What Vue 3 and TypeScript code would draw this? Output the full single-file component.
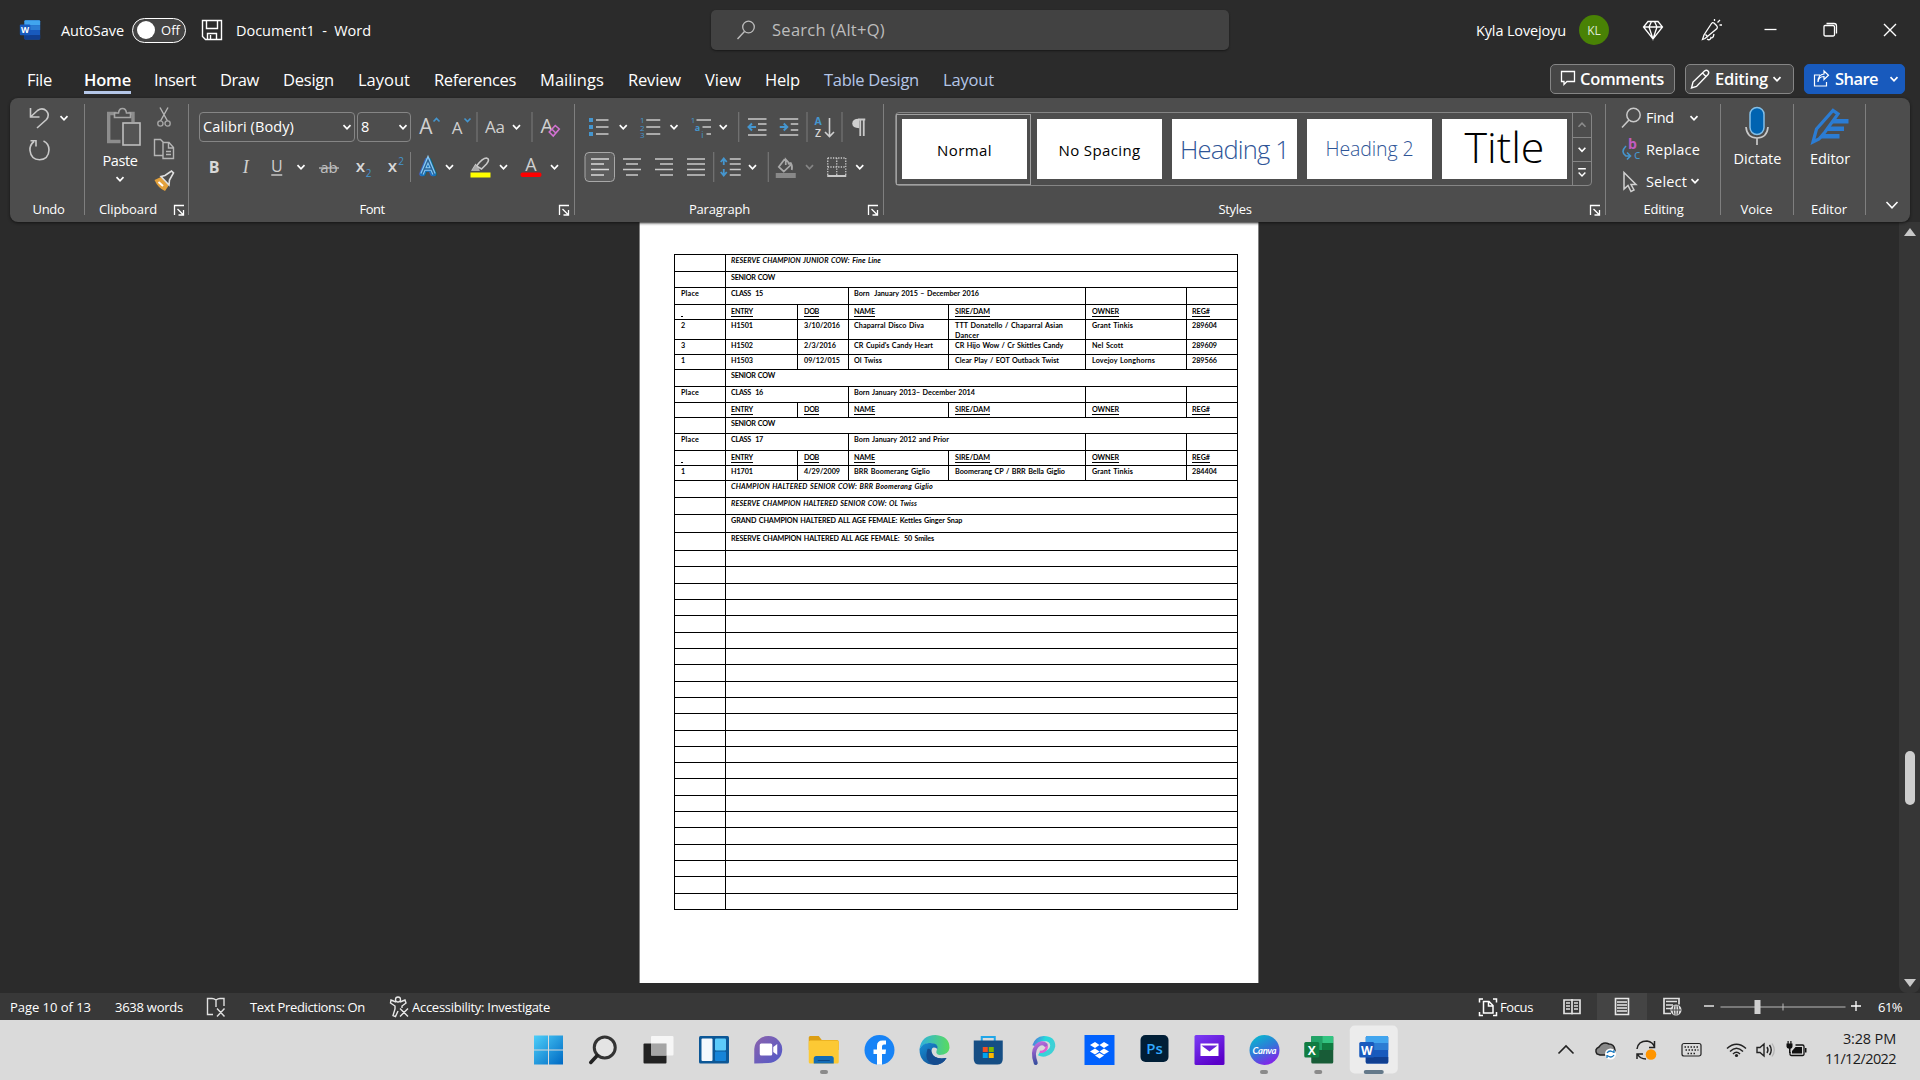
<script setup lang="ts">
type Spot = [name: string, center: number]
interface Cell { name: string; width: number; left: number }

// Splits the span from..to into cells whose icons sit on the given centers.
function cells(from: number, to: number, spots: Spot[]): Cell[] {
  let start = from
  return spots.map(([name, center], i) => {
    const end = i + 1 < spots.length ? (center + spots[i + 1][1]) / 2 : to
    const cell = { name, width: end - start, left: start - center }
    start = end
    return cell
  })
}

// Tracks a label so that it takes the given width in pixels.
const vFit = {
  mounted(el: HTMLElement, binding: { value: number }) {
    const range = document.createRange()
    range.selectNodeContents(el)
    const natural = range.getBoundingClientRect().width
    const count = (el.textContent ?? '').length
    if (count > 0) el.style.letterSpacing = `${((binding.value - natural) / count).toFixed(3)}px`
  },
}

const line = (d: string, color = '#c9c9c9', width = 1.5) =>
  `<path d="${d}" fill="none" stroke="${color}" stroke-width="${width}"/>`
const glyph = (t: string, x: number, y: number, size: number, fill = '#d0d0d0', extra = '') =>
  `<text x="${x}" y="${y}" font-size="${size}" fill="${fill}" text-anchor="middle" font-family="Open Sans" ${extra}>${t}</text>`
const wordMark = (s: number) => `<g transform="scale(${s})"><rect x="-8" y="-14" width="22.500" height="27.500" rx="1.500" fill="#185abd"/><path d="M-8 -12.500q0-1.500 1.500-1.500h19.500q1.500 0 1.500 1.500v5.500h-22.500z" fill="#41a5ee"/><rect x="-8" y="-7" width="22.500" height="7" fill="#2b7cd3"/><path d="M-8 7h22.500v5q0 1.500-1.500 1.500h-19.500q-1.500 0-1.500-1.500z" fill="#103f91"/><rect x="-14.500" y="-8" width="15" height="15.500" rx="1.500" fill="#185abd"/><text x="-7" y="4.600" font-size="12" font-weight="bold" fill="#fff" text-anchor="middle" font-family="Open Sans">W</text></g>`
const blue = '#4596cf'

const icons: Record<string, string> = {
  sep: line('M0-15V15', '#7d7d7d', 1),
  chev: line('M-3.500-1.800L0 1.800L3.500-1.800', '#fff', 1.7),
  chevDim: line('M-3.500-1.800L0 1.800L3.500-1.800', '#858585', 1.7),
  chevUpDim: line('M-3.500 1.800L0-1.800L3.500 1.800', '#8c8c8c', 1.5),
  chevMore: line('M-4-5H4M-3.500-1L0 2.500L3.500-1', '#fff', 1.5),
  collapse: line('M-5.500-3L0 2.800L5.500-3', '#fff', 1.5),
  launcher: line('M-4.500 5V-4.500H5M-1.500-1L4 4.500M4.500 0V5H-.5', '#fff', 1.3),
  word: wordMark(0.7),
  save: line('M-9.500-9.500H9.500V9.500H-6.500L-9.500 6.500ZM-5.500-9.500V-1.500H5.500V-9.500M-4.500 9.500V3.500H4.500V9.500M-1.500 5V9.500', '#fff', 1.4),
  search: line('M-8.500 9L-1.500 1.500', '#bdbdbd', 1.4) + '<circle cx="2.500" cy="-3" r="5.800" fill="none" stroke="#bdbdbd" stroke-width="1.300"/>',
  diamond: line('M-5-8.500H5L9.500-3L0 9L-9.500-3ZM-9.500-3H9.500M-4-3L0 9L4-3L1.500-8.500M-4-3L-1.500-8.500', '#fff', 1.3),
  pen: line('M-8.500 9.500L-6 8.500L6-1.500Q7-3 5.500-4.500L3-7Q1.500-8 .5-6.500L-7 5ZM-4 9Q-1 11 0 7.500Q2 9 3 4M3.500-9V-11M6.500-7.500L9-10M8.500-5H11M-5.500 4.500L-3 7', '#fff', 1.3),
  min: line('M-6-.5H6', '#fff', 1.3),
  restore: line('M-6-3.500Q-6-4.500-5-4.500H3Q4.500-4.500 4.500-3V4.500Q4.500 6 3 6H-4.500Q-6 6-6 4.500ZM-3.500-6.500H4Q6.500-6.500 6.500-4V3.500', '#fff', 1.3),
  close: line('M-6-6L6 6M6-6L-6 6', '#fff', 1.4),
  comment: line('M-6.500-6.500H6.500V3.500H-1L-4 6.500V3.500H-6.500Z', '#fff', 1.3),
  pencil: line('M-8.500 9L-7 3L4.500-8Q6.500-9.500 8-8Q9.500-6.500 8 -4.500L-3.500 7.500ZM2.500-6L6.500-2', '#fff', 1.4),
  share: line('M-1-4H-6.500V7H5.500V3M-3 3Q-2.500-2.500 3-2.500V.5L7.500-3.800L3-8V-5Q-3-4.500-3 3', '#fff', 1.2),
  undo: line('M-9-10V-1H0M-8.500-1.500L-2-7.500Q3-11 7-7Q10.500-3 7 1.500L-2.500 10', '#c9c9c9', 1.6),
  redo: line('M-5.500-8.500Q-10-5-9.500.5Q-8.500 9.500 0 9.800Q9 9.500 9.500 0Q9.500-6.500 4-9M-9-9.300H-3.500V-3.500', '#c9c9c9', 1.6),
  paste: '<g transform="translate(2.500 0)"><path d="M-6-13.500H-13.800V14.500H-2M6-13.500H10.500V-5" fill="none" stroke="#8d8d8d" stroke-width="3.400"/><path d="M-8-9.500V-14H-4Q-3.500-18.500 0-18.500Q3.500-18.500 4-14H8V-9.500Z" fill="#4d4d4d" stroke="#a5a5a5" stroke-width="1.600"/><rect x="0.500" y="-4" width="17" height="22" fill="#555" stroke="#bdbdbd" stroke-width="1.600"/></g>',
  cut: line('M-4-9.500L3.500 4M4-9.500L-3.500 4', '#b5b5b5', 1.4) + '<g fill="none" stroke="#a5a5a5" stroke-width="1.400"><circle cx="-3.600" cy="6.500" r="2.600"/><circle cx="3.600" cy="6.500" r="2.600"/></g>',
  copy: line('M-1 6.500H-9.500V-9.500H-3.500L0-6M-1-6.500H5L9.500-1.500V9.500H-1ZM4.500-6V-1H9M2 2.500H7M2 5.500H7', '#b5b5b5', 1.4),
  brush: '<path d="M-9.500-1L-3-4L5 4L1 10Q-6 7-9.500-1Z" fill="#e3a13c"/><path d="M-5.500 1L-1 5" stroke="#fff" stroke-width="2"/><path d="M-3-4.500L1-5.500L7.500-10L9.500-8L5.500-1L5 4Z" fill="#4d4d4d" stroke="#e0e0e0" stroke-width="1.600"/>',
  grow: glyph('A', -1, 7, 21) + line('M6.500-5.500L9.500-8.500L12.500-5.500', blue, 1.6),
  shrink: glyph('A', -2, 7, 17) + line('M5.500-8.500L8.500-5.500L11.500-8.500', blue, 1.6),
  aa: glyph('Aa', 0, 6, 17, '#d0d0d0', 'textLength="20"'),
  clear: glyph('A', -3, 6, 20) + '<path d="M-.5 5L5.500-1.500L9.500 2L3.500 9Z M2 2L6 6" fill="#4d4d4d" stroke="#d272d2" stroke-width="1.600"/>',
  bold: glyph('B', 0, 6, 16, '#d8d8d8', 'font-weight="bold"'),
  italic: '<text x="0" y="6" font-size="18" fill="#d0d0d0" text-anchor="middle" font-style="italic" font-family="Liberation Serif">I</text>',
  underline: glyph('U', 0, 5, 16) + line('M-5.500 8H5.500', '#d0d0d0', 1.4),
  strike: glyph('ab', 0, 6, 15, '#c0c0c0') + line('M-10 1H10', '#c0c0c0', 1.3),
  sub: glyph('x', -2, 5, 17, '#d8d8d8', 'font-weight="600"') + glyph('2', 6, 10, 10, blue),
  sup: glyph('x', -3, 5, 17, '#d8d8d8', 'font-weight="600"') + glyph('2', 5.500, -2, 10, blue),
  effect: glyph('A', 0, 7, 20, '#1672be', 'stroke="#1672be" stroke-width="4.500" stroke-linejoin="round"') + line('M-6 7L0-7.500L6 7M-3.500 2H3.500', '#8cc8f2', 3.6) + line('M-6.200 7.500L0-7L6.200 7.500M-3.500 2H3.500', '#2a6496', 1.4),
  marker: '<rect x="-10" y="5.500" width="20" height="5" fill="#ff0"/>' + line('M-8 3L-5-2L-2 3ZM-4-1Q2-9 6-9Q10-8 6-3L1 2Z', '#c9c9c9', 1.6) + '<path d="M-9 4L-5-2L-1 3Z" fill="#aaa"/>',
  color: glyph('A', 0, 3.500, 18) + '<rect x="-10.500" y="5.500" width="21" height="4.500" rx="2" fill="#f00"/>',
  bullets: '<path d="M-10-9h4v4h-4zM-10-2h4v4h-4zM-10 5h4v4h-4z" fill="#4596cf"/>' + line('M-3-7H9.500M-3 0H9.500M-3 7H9.500', '#c9c9c9', 1.7),
  numbers: glyph('1', -8, -4, 8, blue) + glyph('2', -8, 3.500, 8, blue) + glyph('3', -8, 11, 8, blue) + line('M-4-7H10M-4 0H10M-4 7H10', '#c9c9c9', 1.7),
  multi: glyph('1', -8.500, -4, 8, blue) + glyph('a', -4, 3.500, 9, blue, 'font-weight="bold"') + glyph('i', 1, 11, 9, blue) + line('M-5-7H9.500M1 0H9.500M5 7H9.500', '#c9c9c9', 1.7),
  outdent: line('M-9-8H9.500M1-3H9.500M1 3H9.500M-9 8H9.500', '#c9c9c9', 1.6) + line('M-1 0H-8M-5-3.500L-8.500 0L-5 3.500', blue, 2),
  indent: line('M-9-8H9.500M2-3H9.500M2 3H9.500M-9 8H9.500', '#c9c9c9', 1.6) + line('M-9 0H-2M-5-3.500L-1.500 0L-5 3.500', blue, 2),
  sort: glyph('A', -5.500, -2, 10.500, blue, 'font-weight="bold"') + glyph('Z', -5.500, 9.500, 10.500, '#d8d8d8', 'font-weight="600"') + line('M6-9V9M1.500 5L6 9.500L10.500 5', '#d0d0d0', 1.6),
  pilcrow: line('M2-7V9M5.500-7V9M0-7.500H7', '#c9c9c9', 1.8) + '<path d="M1-8.300Q-6-8.500-6-3.500Q-6 1 1 1.200Z" fill="#d0d0d0"/>',
  left: '<rect x="-15" y="-14.500" width="29.500" height="29" rx="4" fill="#5c5c5c" stroke="#a8a8a8"/>' + line('M-9-8H9M-9-3H4M-9 2.500H9M-9 8H4', '#d8d8d8', 1.6),
  center: line('M-9-8H9M-6-3H6M-9 2.500H9M-6 8H6', '#c9c9c9', 1.6),
  right: line('M-9-8H9M-4-3H9M-9 2.500H9M-4 8H9', '#c9c9c9', 1.6),
  justify: line('M-9-8H9M-9-3H9M-9 2.500H9M-9 8H9', '#c9c9c9', 1.6),
  spacing: line('M-1-8H10M-1-3H10M-1 2.500H10M-1 8H10', '#c9c9c9', 1.6) + line('M-7-8V-2M-10-5L-7-8.500L-4-5M-7 2V8M-10 5L-7 8.500L-4 5', blue, 1.8),
  bucket: '<rect x="-10" y="6" width="20" height="5" fill="#888"/>' + line('M-1-8L-7 0L-2 4.500L5-2L0-7.500V-2M2-3L5-4Q7-1 6 3', '#a8a8a8', 1.7),
  borders: '<path d="M-9-9H9M-9-9V8M9-9V8M0-9V8M-9 0H9" fill="none" stroke="#c9c9c9" stroke-width="1.300" stroke-dasharray="1.300 1.300"/>' + line('M-9.500 9H9.500', '#c9c9c9', 2),
  find: line('M-9 9.500L-2 2', '#c9c9c9', 1.6) + '<circle cx="2.500" cy="-3" r="6.700" fill="none" stroke="#c9c9c9" stroke-width="1.500"/>',
  replace: glyph('b', 1.500, -1, 14, '#c25cc0', 'font-weight="bold"') + glyph('c', 6, 9, 13, blue) + line('M-5-4Q-11 2-5 6L-1 6M-4 2.500L-.5 6L-4 9.500', blue, 1.6),
  select: line('M-6-9.500V7L-2 3.500L1 9.500L4 8L1 2.500H6Z', '#d0d0d0', 1.5),
  mic: line('M-11 1Q-10 12 0 12Q10 12 11 1M0 12V19', '#c9c9c9', 1.7) + '<rect x="-7" y="-18.500" width="14" height="27" rx="7" fill="#0063b1" stroke="#83bfe8" stroke-width="1.500"/>',
  editor: '<path d="M-16 16L-12.500 3L4-15.500L9-12L-4 6L-10 13Z" fill="none" stroke="#2b7cd3" stroke-width="3.200"/><path d="M6-7H19.500V-2.500H2ZM0 0.500H15V5H-4ZM-6 8H10.500V12.500H-11Z" fill="#2b7cd3"/>',
  proof: line('M0-7Q-2-8.500-4-8.500H-8.500V7.500H-3M0-7Q2-8.500 4-8.500H8V-1M0-7V0M1 1.500L8.500 9.500M8.500 1.500L1 9.500', '#e0e0e0', 1.4),
  access: '<circle cx="-1" cy="-7.500" r="2.500" fill="none" stroke="#e8e8e8" stroke-width="1.300"/>' + line('M-3-5L-8-7L-8.500-4L-4-1V2L-6 8.500L-3.500 9.500L-1 4M1-5L6-7L7-4L3-1V1M1 1.500L9 9.500M9 1.500L1 9.500', '#e8e8e8', 1.4),
  focus: line('M-5-8H-8.500V-4.500M-8.500 5V8.500H-5M5-8H8.500V-4.500M8.500 5V8.500H5M-4.500-5.500H1L5-1.500V6H-4.500ZM.5-5V-1H4.500', '#fff', 1.5),
  read: line('M0-6.500H-8V7H0H8V-6.500ZM0-7.500V8M-6-3.500H-2M-6-.5H-2M-6 2.500H-2M2-3.500H6M2-.5H6M2 2.500H6', '#e0e0e0', 1.7),
  print: line('M-6.500-8H6.500V8H-6.500ZM-5-4.500H5M-5-1.500H5M-5 1.500H5M-5 4.500H5', '#e8e8e8', 1.6),
  web: line('M-1 7H-8V-8H7V-2M-6-5H5M-6-1.500H1M-6 2H-1', '#e0e0e0', 1.7) + '<circle cx="4" cy="3.500" r="5.500" fill="#e0e0e0"/>' + line('M-1 3.500H9M4-1V8.500M2-1Q0 3.500 2 8M6-1Q8 3.500 6 8', '#383838', .9),
  minus: line('M-5-1H5', '#fff', 1.3),
  plus: line('M-5-1H5M0-6V4', '#fff', 1.3),
  slider: '<path d="M-62.500 0H62.500M0-3.500V3.500" stroke="#b8b8b8" fill="none"/><rect x="-28.500" y="-7" width="6" height="14" fill="#d0d0d0"/>',
  windows: '<defs><linearGradient id="wn" gradientUnits="userSpaceOnUse" x1="-14" y1="-14" x2="14" y2="14"><stop stop-color="#4ccdf8"/><stop offset="1" stop-color="#006ac4"/></linearGradient></defs><path d="M-14.500-14.500H-.5V-.5H-14.500ZM.5-14.500H14.500V-.5H.5ZM-14.500.5H-.5V14.500H-14.500ZM.5.5H14.500V14.500H.5Z" fill="url(#wn)"/>',
  lens: '<circle cx="1.500" cy="-2.500" r="10.500" fill="#e4e4e4" stroke="#333" stroke-width="3"/><path d="M-6 5.500L-12.500 12.500" stroke="#222" stroke-width="3.500" stroke-linecap="round"/>',
  tasks: '<rect x="-15" y="-6.500" width="23" height="20" rx="1" fill="#222"/><rect x="-7.500" y="-14" width="22.500" height="19.500" rx="1" fill="#f8f8f8" opacity=".9"/><rect x="-7.500" y="-6.500" width="15.500" height="12" fill="#a5a5a5"/>',
  widgets: '<rect x="-15" y="-14" width="30" height="27.500" rx="1.500" fill="#0c5796"/><rect x="-12.500" y="-11.500" width="11" height="22.500" rx="1" fill="#f4f8fc"/><rect x="1" y="-11.500" width="11" height="12" rx="1" fill="#5ccbfa"/><rect x="1" y="1.500" width="11" height="9.500" rx="1" fill="#1684d8"/>',
  chat: '<defs><linearGradient id="ch" x2="1" y2="1"><stop stop-color="#8c63ac"/><stop offset="1" stop-color="#5059c9"/></linearGradient></defs><path d="M-14 13.500V-1A14 13.500 0 1 1 0 13Z" fill="url(#ch)"/><rect x="-8.500" y="-6.500" width="12.500" height="12" rx="1.500" fill="#fff"/><path d="M5-3L9-6V5L5 2Z" fill="#fff"/>',
  folder: '<path d="M-15-12.500Q-15-14-13.500-14H-5L-2-10H13Q15-10 15-8V0H-15Z" fill="#dc9e13"/><rect x="-15" y="-9.500" width="30" height="23" rx="1.500" fill="#fcc934"/><path d="M-10 13.500V8.500Q-10 6-7.500 6H7.500Q10 6 10 8.500V13.500Z" fill="#136cb5"/><path d="M-6 10.500H6" stroke="#0a4886"/>',
  facebook: '<circle r="15" fill="#1783f6"/><path d="M-2.500 14.800V4H-6V-.5H-2.500V-4Q-2.500-9.500 3-9.500H6.500V-5.500H4.500Q2.500-5.500 2.500-3.500V-.5H6.500L6 4H2.500V14.800Z" fill="#fff"/>',
  edge: '<defs><linearGradient id="e1" x2="1"><stop stop-color="#2fb1df"/><stop offset="1" stop-color="#59db5f"/></linearGradient><linearGradient id="e2" x2="1" y2="1"><stop stop-color="#1791d8"/><stop offset="1" stop-color="#123e80"/></linearGradient></defs><path d="M-15-1Q-13-15 1-15Q15-14 15-2Q14 5 5 5Q1 4 2 1Q5-6-4-7Q-11-7-15-1Z" fill="url(#e1)"/><path d="M-15-1Q-11-8-4-7Q4-7 3-1Q-3-5-3 2Q-1 10 12 8Q8 15 0 15Q-15 14-15-1Z" fill="url(#e2)"/><path d="M-7-1Q-11 12 0 15Q8 15 12 8Q-1 10-3 2Q-4-2-7-1Z" fill="#154c8f"/>',
  store: '<path d="M-6.500-9V-13H6.500V-9" fill="none" stroke="#20a6e8" stroke-width="2"/><path d="M-14.500-9.500H14.500V9Q14.500 14.500 9 14.500H-9Q-14.500 14.500-14.500 9Z" fill="#164e84"/><path d="M-5.500-3H-.5V2H-5.500Z" fill="#f25022"/><path d="M.5-3H5.500V2H.5Z" fill="#7fba00"/><path d="M-5.500 3H-.5V8H-5.500Z" fill="#00a4ef"/><path d="M.5 3H5.500V8H.5Z" fill="#ffb900"/>',
  paint: '<defs><linearGradient id="p1" x2="1" y2=".4"><stop stop-color="#4f7fd9"/><stop offset=".5" stop-color="#25d9dc"/><stop offset="1" stop-color="#3fd0d6"/></linearGradient><linearGradient id="p2" x2=".2" y2="1"><stop stop-color="#c46be0"/><stop offset="1" stop-color="#3a4fa0"/></linearGradient></defs><path d="M-9-4Q-7-11 0-11.500Q9-11.500 9-4Q8 2 1 4Q-2 4.500-4.500 3" fill="none" stroke="url(#p1)" stroke-width="5"/><path d="M-8 13Q-12 2-7-4Q-2-9 2-5" fill="none" stroke="url(#p2)" stroke-width="4" stroke-linecap="round"/><path d="M-4 2Q3 2 3-4" fill="none" stroke="#e05fd0" stroke-width="2.500"/>',
  dropbox: '<rect x="-15" y="-15" width="30" height="30" fill="#0061fe"/><path d="M-9.500-5L-4.500-8L0-5L-4.500-2ZM9.500-5L4.500-8L0-5L4.500-2ZM-9.500 1.500L-4.500-1.500L0 1.500L-4.500 4.500ZM9.500 1.500L4.500-1.500L0 1.500L4.500 4.500ZM-4.500 5.500L0 3L4.500 5.500L0 8.500Z" fill="#fff"/>',
  photoshop: '<rect x="-14" y="-15" width="28" height="27" rx="5" fill="#001e36"/>' + glyph('Ps', 0, 4, 15, '#31a8ff', 'font-weight="600"'),
  mail: '<defs><linearGradient id="ml" x2=".6" y2="1"><stop stop-color="#7b3df5"/><stop offset="1" stop-color="#5a00c9"/></linearGradient></defs><rect x="-15" y="-15" width="30" height="30" rx="1.500" fill="url(#ml)"/><rect x="-9" y="-6.500" width="18" height="12.500" fill="#fff"/><path d="M-8-4.500H8L0 1.500Z" fill="#6a22d8"/>',
  canva: '<defs><linearGradient id="cv" x2=".5" y2="1"><stop stop-color="#00c4cc"/><stop offset=".55" stop-color="#2f7bd8"/><stop offset="1" stop-color="#7d2ae8"/></linearGradient></defs><circle r="15" fill="url(#cv)"/><text y="3.500" text-anchor="middle" font-family="Lato" font-size="9.500" font-style="italic" font-weight="bold" fill="#fff" textLength="24">Canva</text>',
  excel: '<rect x="-7" y="-14" width="22" height="27.500" rx="1.500" fill="#185c37"/><rect x="-7" y="-14" width="11" height="14" fill="#21a366"/><rect x="4" y="-14" width="11" height="7" fill="#33c481"/><rect x="4" y="-7" width="11" height="7" fill="#107c41"/><rect x="-14" y="-8" width="15" height="15.500" rx="1.500" fill="#107c41"/>' + glyph('X', -6.500, 4.500, 12, '#fff', 'font-weight="bold"'),
  wordTask: '<rect x="-24" y="-24.500" width="48" height="48" rx="5" fill="#ececec"/>' + wordMark(1),
  dot: '<rect x="-4" y="-2" width="8" height="4" rx="2" fill="#8a8a8a"/>',
  bar: '<rect x="-10" y="-2" width="20" height="4" rx="2" fill="#64798a"/>',
  up: line('M-7.500 3.500L0-4L7.500 3.500', '#222', 1.6),
  cloud: '<path d="M-9 4Q-12-1-7-3Q-3-9 3-6Q8-6 9 0Q9 4 5 5H-6Z" fill="#888" stroke="#222" stroke-width="1.500"/><circle cx="4.500" cy="4" r="5.500" fill="#fff"/>' + line('M1 3Q3 0 6 1.500L8 2.500M8 0V3M8 5Q6 8 3 6.500L1 5.500M1 8V5', '#1576bd', 1.3),
  sync: line('M-9-1Q-8-9 1-9Q7-8 8.500-3M8.500-9V-2.500H3M-9 9V4H-3M-8.500 4Q-6 9 0 9', '#222', 1.5) + '<circle cx="5" cy="4.500" r="5.300" fill="#ff9500"/>',
  keyboard: '<rect x="-9.500" y="-6.500" width="19" height="12.500" rx="2" fill="none" stroke="#222" stroke-width="1.200"/><path d="M-7-3H7M-6 0H7M-4 3.500H4" stroke="#222" stroke-width="1.300" stroke-dasharray="1.500 1.500" fill="none"/>',
  wifi: line('M-9.500-1.500Q0-10 9.500-1.500M-6.500 1.500Q0-5 6.500 1.500M-3.500 4Q0 .5 3.500 4', '#222', 1.5) + '<circle cy="5.500" r="1.600" fill="#222"/>',
  speaker: line('M-8.500-2.500H-5.500L-1.500-6V6L-5.500 2.500H-8.500ZM1.500-3Q3.500 0 1.500 3M4-5Q7.500 0 4 5', '#222', 1.4) + line('M6.500-6.500Q11 0 6.500 6.500', '#b5b5b5', 1.3),
  battery: line('M-1-5H6Q7.500-5 7.500-3.500V4Q7.500 5.500 6 5.500H-5Q-6.500 5.500-6.500 4V2', '#111', 1.3) + '<path d="M-1-3H5.500V3.500H-4.500V1Z" fill="#111"/><path d="M8.500-2H10V2.500H8.500Z" fill="#111"/><path d="M-10-6.500H-9V-9H-7.800V-6.500H-6.200V-9H-5V-6.500H-4V-3.500Q-4-1.500-6-1.200V3H-7.500V-1.200Q-10-1.500-10-3.500Z" fill="#111"/>',
}

const menu = [
  { t: 'File', w: 25 }, { t: 'Home', w: 47, on: true }, { t: 'Insert', w: 42 }, { t: 'Draw', w: 39 },
  { t: 'Design', w: 51 }, { t: 'Layout', w: 52 }, { t: 'References', w: 82 }, { t: 'Mailings', w: 64 },
  { t: 'Review', w: 53 }, { t: 'View', w: 36 }, { t: 'Help', w: 35 },
  { t: 'Table Design', w: 95, context: true }, { t: 'Layout', w: 51, context: true },
]

const fontTop = cells(414, 574, [['grow', 427], ['shrink', 459], ['sep', 477], ['aa', 495], ['chev', 516], ['sep', 532], ['clear', 549.5]])
const fontLow = cells(189, 574, [['bold', 214], ['italic', 245.5], ['underline', 277], ['chev', 301], ['strike', 329], ['sub', 362], ['sup', 395], ['sep', 410], ['effect', 428], ['chev', 449], ['marker', 480], ['chev', 503], ['color', 531], ['chev', 554]])
const paraTop = cells(575, 883, [['bullets', 599], ['chev', 623.5], ['numbers', 650], ['chev', 674], ['multi', 701], ['chev', 723.5], ['sep', 739], ['outdent', 757], ['indent', 788.5], ['sep', 806.5], ['sort', 823.5], ['sep', 841.5], ['pilcrow', 858]])
const paraLow = cells(575, 883, [['left', 600], ['center', 632], ['right', 664], ['justify', 696], ['sep', 713.5], ['spacing', 731], ['chev', 752], ['sep', 768.5], ['bucket', 786], ['chevDim', 809], ['borders', 836.5], ['chev', 860]])
const controls = cells(1620, 1920, [['diamond', 1653], ['pen', 1711], ['min', 1770], ['restore', 1830], ['close', 1890]])
const tasks = cells(520, 1410, [['windows', 548.5], ['lens', 603], ['tasks', 658], ['widgets', 714], ['chat', 768.5], ['folder', 824], ['facebook', 879], ['edge', 934], ['store', 988.5], ['paint', 1044], ['dropbox', 1099], ['photoshop', 1154], ['mail', 1209], ['canva', 1264], ['excel', 1318.5], ['wordTask', 1374]])
const marks = cells(520, 1410, [['dot', 824], ['dot', 1264], ['dot', 1318.5], ['bar', 1374]])
const tray = cells(1540, 1820, [['up', 1566], ['cloud', 1606], ['sync', 1646], ['keyboard', 1691], ['wifi', 1736], ['speaker', 1765], ['battery', 1796]])

const styleTiles = [
  { t: 'Normal', c: 'plain', w: 55 }, { t: 'No Spacing', c: 'plain', w: 82 },
  { t: 'Heading 1', c: 'h1', w: 109 }, { t: 'Heading 2', c: 'h2', w: 88 }, { t: 'Title', c: 'title', w: 80 },
]

type Entry = { t: string; w: number; u?: boolean; i?: boolean; wrap?: string; ww?: number }
interface Line { kind: 'wide' | 'class' | 'full'; h: number; cols: Entry[] }
const e = (t = '', w = 0, u = false): Entry => ({ t, w, u })
const wide = (h: number, t: string, w: number, i = false): Line => ({ kind: 'wide', h, cols: [e(), { t, w, i }] })
const klass = (h: number, n: string, born: string, w: number): Line =>
  ({ kind: 'class', h, cols: [e('Place', 18), e(`CLASS  ${n}`, 32), e(born, w), e(), e()] })
const heads = (h: number, first = ''): Line =>
  ({ kind: 'full', h, cols: [e(first, first ? 2 : 0, true), e('ENTRY', 22, true), e('DOB', 15, true), e('NAME', 21, true), e('SIRE/DAM', 35, true), e('OWNER', 27, true), e('REG#', 18, true)] })
const full = (h: number, cols: Entry[]): Line => ({ kind: 'full', h, cols })

const lines: Line[] = [
  wide(17, 'RESERVE CHAMPION JUNIOR COW: Fine Line', 150, true),
  wide(16, 'SENIOR COW', 44),
  klass(17, '15', 'Born  January 2015 – December 2016', 125),
  heads(15, ' '),
  full(20, [e('2', 4), e('H1501', 22), e('3/10/2016', 36), e('Chaparral Disco Diva', 70), { t: 'TTT Donatello / Chaparral Asian', w: 108, wrap: 'Dancer', ww: 24 }, e('Grant Tinkis', 41), e('289604', 25)]),
  full(15, [e('3', 4), e('H1502', 22), e('2/3/2016', 32), e("CR Cupid's Candy Heart", 79), e('CR Hijo Wow / Cr Skittles Candy', 108), e('Nel Scott', 31), e('289609', 25)]),
  full(15, [e('1', 4), e('H1503', 22), e('09/12/015', 36), e('Ol Twiss', 28), e('Clear Play / EOT Outback Twist', 104), e('Lovejoy Longhorns', 63), e('289566', 25)]),
  wide(17, 'SENIOR COW', 44),
  klass(16, '16', 'Born January 2013– December 2014', 121),
  heads(15),
  wide(16, 'SENIOR COW', 44),
  klass(17, '17', 'Born January 2012 and Prior', 95),
  heads(15, ' '),
  full(15, [e('1', 4), e('H1701', 22), e('4/29/2009', 36), e('BRR Boomerang Giglio', 76), e('Boomerang CP / BRR Bella Giglio', 110), e('Grant Tinkis', 41), e('284404', 25)]),
  wide(17, 'CHAMPION HALTERED SENIOR COW: BRR Boomerang Giglio', 202, true),
  wide(17, 'RESERVE CHAMPION HALTERED SENIOR COW: OL Twiss', 186, true),
  wide(18, 'GRAND CHAMPION HALTERED ALL AGE FEMALE: Kettles Ginger Snap', 231),
  wide(18, 'RESERVE CHAMPION HALTERED ALL AGE FEMALE:  50 Smiles', 203),
  ...Array.from({ length: 22 }, (_, i) =>
    wide(Math.round(((i + 1) * 359) / 22) - Math.round((i * 359) / 22), '', 0)),
]
</script>

<template>
  <div class="screen">
    <header class="titlebar">
      <svg class="app" width="20" height="22" viewBox="-10 -11 20 22" v-html="icons.word" />
      <span v-fit="63" class="autosave">AutoSave</span>
      <span class="toggle"><i class="knob" /><span v-fit="19">Off</span></span>
      <svg class="save" width="22" height="22" viewBox="-11 -11 22 22" v-html="icons.save" />
      <span v-fit="135" class="docname">Document1&nbsp; -&nbsp; Word</span>
      <div class="search">
        <svg width="20" height="22" viewBox="-10 -11 20 22" v-html="icons.search" />
        <span v-fit="113">Search (Alt+Q)</span>
      </div>
      <span class="user"><span v-fit="90">Kyla Lovejoyu</span></span>
      <span class="avatar">KL</span>
      <span class="controls">
        <svg v-for="(c, i) in controls" :key="i" :width="c.width" height="60" :viewBox="`${c.left} -30 ${c.width} 60`" v-html="icons[c.name]" />
      </span>
    </header>

    <nav class="menu">
      <span v-for="(m, i) in menu" :key="i" class="tab" :class="{ on: m.on, context: m.context }"><span v-fit="m.w">{{ m.t }}</span></span>
      <span class="btn comments"><svg width="14" height="20" viewBox="-7 -9 14 20" v-html="icons.comment" /><b v-fit="84">Comments</b></span>
      <span class="btn editing"><svg width="20" height="24" viewBox="-10 -12 20 24" v-html="icons.pencil" /><b v-fit="53">Editing</b><svg width="10" height="10" viewBox="-4 -5 10 10" v-html="icons.chev" /></span>
      <span class="btn share"><svg width="15" height="20" viewBox="-7 -10 15 20" v-html="icons.share" /><b v-fit="43">Share</b><svg class="more" width="10" height="10" viewBox="-5 -5 10 10" v-html="icons.chev" /></span>
    </nav>

    <section class="ribbon">
      <div class="group undo">
        <div class="body thirds">
          <div class="row"><svg v-for="(c, i) in cells(10, 84, [['undo', 39.5], ['chev', 63.5]])" :key="i" :width="c.width" height="32" :viewBox="`${c.left} -16 ${c.width} 32`" v-html="icons[c.name]" /></div>
          <div class="row"><svg width="59" height="32" viewBox="-29.500 -16 59 32" v-html="icons.redo" /></div>
        </div>
        <div class="label"><span v-fit="32">Undo</span></div>
      </div>

      <div class="group clipboard">
        <div class="body split">
          <div class="pastecol">
            <svg width="70" height="42" viewBox="-35 -21 70 42" v-html="icons.paste" />
            <span v-fit="35">Paste</span>
            <svg width="12" height="12" viewBox="-6 -6 12 12" v-html="icons.chev" />
          </div>
          <div class="stack">
            <svg v-for="n in ['cut', 'copy', 'brush']" :key="n" width="18" height="32" viewBox="-9 -16 18 32" v-html="icons[n]" />
          </div>
        </div>
        <div class="label"><span v-fit="58">Clipboard</span><svg width="18" height="18" viewBox="-8 -9 18 18" v-html="icons.launcher" /></div>
      </div>

      <div class="group font">
        <div class="body halves">
          <div class="row">
            <span class="combo family"><span v-fit="91">Calibri (Body)</span><svg width="14" height="14" viewBox="-7 -7 14 14" v-html="icons.chev" /></span>
            <span class="combo size"><span>8</span><svg width="14" height="14" viewBox="-7 -7 14 14" v-html="icons.chev" /></span>
            <svg v-for="(c, i) in fontTop" :key="i" :width="c.width" height="40" :viewBox="`${c.left} -20 ${c.width} 40`" v-html="icons[c.name]" />
          </div>
          <div class="row"><svg v-for="(c, i) in fontLow" :key="i" :width="c.width" height="40" :viewBox="`${c.left} -20 ${c.width} 40`" v-html="icons[c.name]" /></div>
        </div>
        <div class="label"><span v-fit="25">Font</span><svg width="20" height="18" viewBox="-9 -9 20 18" v-html="icons.launcher" /></div>
      </div>

      <div class="group para">
        <div class="body halves">
          <div class="row"><svg v-for="(c, i) in paraTop" :key="i" :width="c.width" height="40" :viewBox="`${c.left} -20 ${c.width} 40`" v-html="icons[c.name]" /></div>
          <div class="row"><svg v-for="(c, i) in paraLow" :key="i" :width="c.width" height="40" :viewBox="`${c.left} -20 ${c.width} 40`" v-html="icons[c.name]" /></div>
        </div>
        <div class="label"><span v-fit="61">Paragraph</span><svg width="20" height="18" viewBox="-9 -9 20 18" v-html="icons.launcher" /></div>
      </div>

      <div class="group styles">
        <div class="body">
          <div class="gallery">
            <div v-for="(s, i) in styleTiles" :key="s.t" class="frame" :class="{ picked: i === 0 }">
              <div class="tile" :class="s.c"><span v-fit="s.w">{{ s.t }}</span></div>
            </div>
            <div class="pager">
              <svg v-for="n in ['chevUpDim', 'chev', 'chevMore']" :key="n" width="18" height="24" viewBox="-9 -12 18 24" v-html="icons[n]" />
            </div>
          </div>
        </div>
        <div class="label"><span v-fit="33">Styles</span><svg width="20" height="18" viewBox="-9 -9 20 18" v-html="icons.launcher" /></div>
      </div>

      <div class="group edit">
        <div class="body thirds">
          <div class="row item"><svg width="20" height="32" viewBox="-10 -16 20 32" v-html="icons.find" /><span v-fit="28">Find</span><svg class="far" width="12" height="12" viewBox="-6 -6 12 12" v-html="icons.chev" /></div>
          <div class="row item"><svg width="20" height="32" viewBox="-10 -16 20 32" v-html="icons.replace" /><span v-fit="54">Replace</span></div>
          <div class="row item"><svg width="20" height="32" viewBox="-9 -16 20 32" v-html="icons.select" /><span v-fit="41">Select</span><svg width="12" height="12" viewBox="-3 -5 12 12" v-html="icons.chev" /></div>
        </div>
        <div class="label"><span v-fit="40">Editing</span></div>
      </div>

      <div class="group voice">
        <div class="body tall"><svg width="40" height="42" viewBox="-19 -21 40 42" v-html="icons.mic" /><span v-fit="48">Dictate</span></div>
        <div class="label"><span v-fit="32">Voice</span></div>
      </div>
      <div class="group proofing">
        <div class="body tall"><svg width="40" height="42" viewBox="-19 -21 40 42" v-html="icons.editor" /><span v-fit="40">Editor</span></div>
        <div class="label"><span v-fit="36">Editor</span></div>
      </div>
      <div class="fold"><svg width="16" height="16" viewBox="-8 -8 16 16" v-html="icons.collapse" /></div>
    </section>

    <main class="workspace">
      <div class="page">
        <div class="table">
          <div v-for="(l, i) in lines" :key="i" class="line" :class="l.kind" :style="{ height: l.h + 'px' }">
            <div v-for="(c, j) in l.cols" :key="j" class="cell">
              <span v-if="c.t === ' '" class="dash">&nbsp;</span>
              <span v-else-if="c.t" v-fit="c.w" :class="{ under: c.u, ital: c.i }">{{ c.t }}</span>
              <span v-if="c.wrap" v-fit="c.ww ?? 0">{{ c.wrap }}</span>
            </div>
          </div>
        </div>
      </div>
      <aside class="scroll"><i class="tri up" /><i class="thumb" /><i class="tri down" /></aside>
    </main>

    <footer class="status">
      <span v-fit="81" class="pages">Page 10 of 13</span>
      <span v-fit="68" class="words">3638 words</span>
      <svg class="proof" width="20" height="24" viewBox="-10 -12 20 24" v-html="icons.proof" />
      <span v-fit="115" class="predict">Text Predictions: On</span>
      <svg class="access" width="20" height="24" viewBox="-9 -12 20 24" v-html="icons.access" />
      <span v-fit="138">Accessibility: Investigate</span>
      <svg class="focus" width="20" height="24" viewBox="-10 -12 20 24" v-html="icons.focus" />
      <span v-fit="33">Focus</span>
      <span class="views">
        <svg width="50" height="27" viewBox="-25 -13.500 50 27" v-html="icons.read" />
        <svg class="active" width="50" height="27" viewBox="-25 -13.500 50 27" v-html="icons.print" />
        <svg width="50" height="27" viewBox="-25 -13.500 50 27" v-html="icons.web" />
      </span>
      <svg width="18" height="24" viewBox="-6 -12 18 24" v-html="icons.minus" />
      <svg width="126" height="24" viewBox="-62 -12 126 24" v-html="icons.slider" />
      <svg width="16" height="24" viewBox="-9 -12 16 24" v-html="icons.plus" />
      <span v-fit="24" class="zoom">61%</span>
    </footer>

    <footer class="taskbar">
      <div class="apps">
        <div class="row"><svg v-for="(c, i) in tasks" :key="i" :width="c.width" height="49" :viewBox="`${c.left} -30 ${c.width} 49`" v-html="icons[c.name]" /></div>
        <div class="row"><svg v-for="(c, i) in marks" :key="i" :width="c.width" height="6" :viewBox="`${c.left} -3 ${c.width} 6`" v-html="icons[c.name]" /></div>
      </div>
      <div class="tray">
        <svg v-for="(c, i) in tray" :key="i" :width="c.width" height="60" :viewBox="`${c.left} -30 ${c.width} 60`" v-html="icons[c.name]" />
      </div>
      <div class="clock"><span v-fit="53">3:28 PM</span><span v-fit="71">11/12/2022</span></div>
    </footer>
  </div>
</template>

<style>
body { margin: 0; overflow: hidden; background: #2b2b2b; }
</style>

<style scoped>
.screen { width: 1920px; height: 1080px; display: flex; flex-direction: column; overflow: hidden; background: #2b2b2b; color: #fff; font-family: "Open Sans", "Noto Sans", sans-serif; font-size: 14.5px; line-height: 20px; white-space: nowrap; }
svg { display: block; flex: none; overflow: visible; }
.row { display: flex; align-items: center; }

.titlebar { display: flex; align-items: center; height: 60px; flex: none; }
.app { margin-left: 20px; }
.autosave { width: 71px; margin-left: 21px; padding-top: 1px; }
.toggle { display: flex; align-items: center; box-sizing: border-box; width: 54px; height: 25px; padding-left: 4px; gap: 6px; border: 1px solid #fff; border-radius: 13px; background: #444; font-size: 13px; }
.knob { width: 18px; height: 18px; border-radius: 50%; background: #fff; }
.save { margin-left: 15px; }
.docname { margin-left: 13px; width: 475px; padding-top: 1px; }
.search { display: flex; align-items: center; box-sizing: border-box; width: 518px; height: 40px; padding-left: 25px; gap: 16px; border-radius: 5px; background: #424242; box-shadow: 0 1px 2px #181818; color: #bdbdbd; font-size: 16.5px; }
.search span { padding-bottom: 1px; }
.user { margin-left: 247px; width: 103px; padding-top: 1px; }
.avatar { width: 30px; height: 30px; border-radius: 50%; background: #498205; text-align: center; line-height: 31px; font-size: 12px; color: #dfe9d3; }
.controls { display: flex; margin-left: 11px; }

.menu { display: flex; align-items: center; height: 38px; flex: none; padding-left: 27px; gap: 24px; font-size: 16.5px; line-height: 24px; }
.tab { position: relative; padding-top: 2px; }
.tab.on { margin: 0 -1px 0 8px; font-weight: 600; }
.tab.on::after { content: ""; position: absolute; left: 0; right: 0; top: 25px; height: 3px; background: #b5c7e8; }
.context { color: #b4c6e7; }
.btn { display: flex; align-items: center; box-sizing: border-box; height: 30px; border: 1px solid #858585; border-radius: 5px; background: #464646; }
.btn b { font-weight: 600; }
.comments { width: 125px; margin-left: auto; padding-left: 10px; gap: 5px; }
.editing { width: 109px; margin-left: -14px; padding-left: 4px; gap: 5px; }
.share { width: 101px; margin: 0 15px 0 -14px; padding-left: 9px; gap: 6px; background: #185abd; border-color: #185abd; }
.share .more { margin-left: 5px; }

.ribbon { display: flex; box-sizing: border-box; flex: none; width: 1900px; height: 124px; margin-left: 10px; border-radius: 8px; background: #4d4d4d; box-shadow: 0 1px 3px #151515; position: relative; z-index: 1; }
.group { display: flex; flex-direction: column; box-sizing: border-box; position: relative; }
.group::after { content: ""; position: absolute; right: 0; top: 6px; height: 111px; width: 1px; background: #7f7f7f; }
.undo { width: 75px; }
.undo .label { padding-left: 2px; }
.clipboard { width: 104px; }
.font { width: 386px; }
.para { width: 309px; }
.styles { width: 722px; }
.edit { width: 115px; }
.voice { width: 73px; }
.proofing { width: 72px; }
.voice .label, .proofing .label { padding-right: 2px; }
.body { height: 99px; box-sizing: border-box; }
.label { display: flex; align-items: center; height: 24px; font-size: 13px; }
.label span { margin: auto; line-height: 16px; }
.label svg { margin-top: 1px; }
.thirds { padding-top: 4px; }
.halves { padding-top: 9.500px; }
.halves .row { height: 39.5px; }
.split { display: flex; padding-top: 3px; }
.pastecol { width: 70px; display: flex; flex-direction: column; align-items: center; padding-top: 5px; }
.pastecol span { margin-top: 3px; line-height: 20px; }
.pastecol svg:last-child { margin-top: 2px; }
.combo { display: flex; align-items: center; justify-content: space-between; box-sizing: border-box; height: 30px; border: 1px solid #858585; border-radius: 4px; padding: 0 0 0 3px; }
.family { width: 156px; margin-left: 10px; }
.size { width: 54px; margin: 0 3px 0 2px; }
.gallery { display: flex; box-sizing: border-box; width: 697px; height: 74px; margin: 15px 0 0 11px; border: 1px solid #858585; border-radius: 4px; transform: translateY(-1px); }
.frame { box-sizing: border-box; width: 135px; height: 71px; margin-top: 1px; padding: 4px 4px 4px 5px; border: 1px solid transparent; flex: none; }
.frame.picked { border-color: #a0a0a0; }
.tile { height: 60px; width: 125px; background: #fff; color: #000; display: flex; align-items: center; justify-content: center; }
.plain { font-size: 15px; padding-top: 1px; height: 59px; }
.h1 { color: #2f5597; font-size: 25.5px; font-weight: 300; }
.h2 { color: #2f5597; font-size: 19.5px; font-weight: 300; }
.title { font-size: 43px; font-weight: 300; line-height: 56px; align-items: flex-start; }
.pager { border-left: 1px solid #858585; margin-left: auto; }
.pager svg + svg { border-top: 1px solid #858585; box-sizing: border-box; }
.item { padding-left: 15px; gap: 5px; }
.item .far { margin-left: 9px; }
.tall { display: flex; flex-direction: column; align-items: center; padding-top: 7px; }
.tall span { margin-top: 2px; }
.fold { display: flex; flex: 1; align-items: flex-end; justify-content: center; padding: 0 0 9px 8px; }

.workspace { display: flex; flex: none; height: 771px; justify-content: flex-end; background: #2b2b2b; }
.page { width: 620px; height: 761px; box-sizing: border-box; background: #fff; margin-right: 640px; padding: 32px 0 0 34px; border: solid #808080; border-width: 0 1px; }
.table { width: 564px; box-sizing: border-box; border: solid #000; border-width: 1px 0 0 1px; color: #000; font: bold 7.2px/10px Lato, "Open Sans", sans-serif; word-spacing: .7px; }
.line { display: grid; }
.wide { grid-template-columns: 51px 512px; }
.class { grid-template-columns: 51px 123px 237px 101px 51px; }
.full { grid-template-columns: 51px 72px 51px 100px 137px 101px 51px; }
.cell { display: flex; flex-direction: column; align-items: flex-start; box-sizing: border-box; min-height: 0; border: solid #000; border-width: 0 1px 1px 0; padding: 1px 0 0 6px; white-space: pre; }
.cell:nth-child(n+2) { padding-left: 5px; }
.full .cell:nth-child(3), .full .cell:nth-child(5), .full .cell:nth-child(6) { padding-left: 6px; }
.under { border-bottom: 1px solid #000; line-height: 9px; margin-top: .5px; }
.dash { width: 2px; height: 10px; border-bottom: 1px solid #000; }
.ital { font-style: italic; }
.scroll { width: 21px; height: 771px; background: #363636; border-radius: 0 0 8px 8px; display: flex; flex-direction: column; align-items: center; box-sizing: border-box; padding-top: 6px; }
.tri { width: 0; height: 0; border: 6px solid transparent; }
.tri.up { border-bottom: 8px solid #c8c8c8; border-top: 0; }
.tri.down { border-top: 8px solid #c8c8c8; border-bottom: 0; margin-top: 174px; }
.thumb { width: 10px; height: 54px; margin-top: 515px; border-radius: 5px; background: #cdcdcd; }

.status { display: flex; align-items: center; flex: none; height: 27px; background: #383838; font-size: 13px; }
.pages { width: 105px; margin-left: 10px; }
.words { width: 91px; }
.predict { width: 115px; margin-left: 24px; }
.access { margin: 0 2px 0 25px; }
.focus { margin: 0 2px 0 928px; }
.views { display: flex; margin-left: 14px; }
.views .active { background: #444; }
.status > .views + svg { margin-left: 6px; }
.zoom { margin-left: 15px; }

.taskbar { display: flex; flex: none; height: 60px; background: #dadada; color: #1c1c1c; padding-left: 520px; }
.apps { width: 1020px; }
.tray { display: flex; width: 280px; }
.clock { width: 76px; display: flex; flex-direction: column; align-items: flex-end; padding-top: 9px; font-size: 14.5px; line-height: 20px; }
</style>
